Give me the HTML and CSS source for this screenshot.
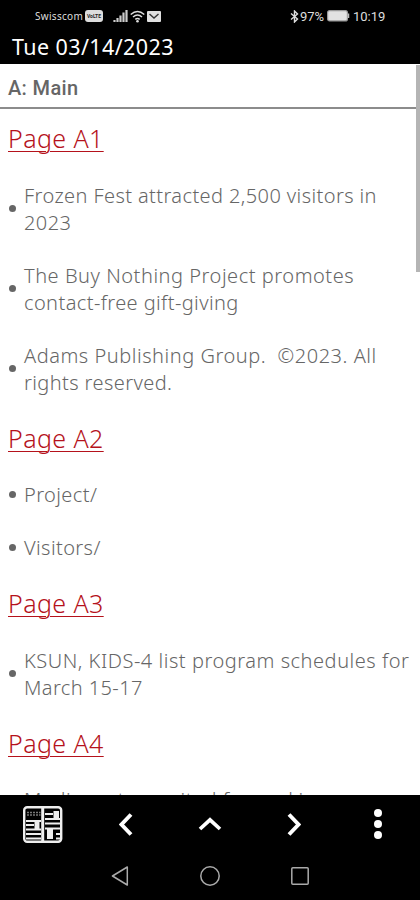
FILE: index.html
```html
<!DOCTYPE html>
<html lang="en">

<head>
    <meta charset="utf-8">
    <meta name="viewport" content="width=device-width, initial-scale=1.0">
    <title>Tue 03/14/2023</title>
    <link rel="stylesheet" href="styles.css">
</head>

<body>
    <header class="top">
        <div class="status">
            <div class="status-left">
                <span class="carrier">Swisscom</span>
                <span class="hd">VoLTE</span>
                <svg class="signal" width="15" height="14" viewBox="0 0 15 14">
                    <path d="M1.500 11v2M4.500 9v4M7.500 6.500v6.500M10.500 3.500v9.500M13.500 1v12" fill="none" stroke="#ccc" stroke-width="2.200" />
                </svg>
                <svg class="wifi" width="15" height="13" viewBox="0 0 15 13">
                    <path d="M.7 4.500Q7.500-1.500 14.300 4.500M3 7Q7.500 3 12 7M5.300 9.300Q7.500 7.500 9.700 9.300" fill="none" stroke="#ddd" stroke-width="1.500" />
                    <circle cx="7.500" cy="11.300" r="1.300" fill="#ddd" />
                </svg>
                <svg class="mail" width="14" height="11" viewBox="0 0 14 11">
                    <rect width="14" height="11" rx="1" fill="#e0e0e0" />
                    <path d="M2.500 3L7 7L11.500 3" fill="none" stroke="#333" stroke-width="1.400" />
                </svg>
            </div>
            <div class="status-right">
                <svg width="9" height="13" viewBox="0 0 9 13">
                    <path d="M1 3.500L7.500 9L4.500 12V1L7.500 4L1 9.500" fill="none" stroke="#ddd" stroke-width="1.400" />
                </svg>
                <span class="percent">97%</span>
                <svg class="battery" width="23" height="12" viewBox="0 0 23 12">
                    <rect x=".6" y=".6" width="19.800" height="10.300" rx="2" fill="#e2e2e2" stroke="#999" stroke-width="1.200" />
                    <path d="M21.500 3.500v4.500" stroke="#bbb" stroke-width="1.500" />
                </svg>
                <span class="clock">10:19</span>
            </div>
        </div>
        <h1 class="date">Tue 03/14/2023</h1>
    </header>

    <div class="section">A: Main</div>

    <main class="content">
        <h2><a class="page">Page A1</a></h2>
        <ul>
            <li class="tight">Frozen Fest attracted 2,500 visitors in<br>2023</li>
            <li>The Buy Nothing Project promotes<br><span class="tight">contact-free gift-giving</span></li>
            <li>Adams Publishing Group.&nbsp; ©2023. All<br><span class="tight">rights reserved.</span></li>
        </ul>
        <h2><a class="page">Page A2</a></h2>
        <ul>
            <li class="tight">Project/</li>
            <li class="tight">Visitors/</li>
        </ul>
        <h2><a class="page">Page A3</a></h2>
        <ul>
            <li>KSUN, KIDS-4 list program schedules for<br><span class="tight">March 15-17</span></li>
        </ul>
        <h2><a class="page">Page A4</a></h2>
        <ul>
            <li>Medicare too united for parking</li>
        </ul>
    </main>

    <footer>
        <nav class="tools">
            <svg class="paper" width="40" height="37" viewBox="0 0 40 37">
                <rect x="1.200" y="1.200" width="37" height="34.500" rx="3" fill="#000" stroke="#eee" stroke-width="2.400" />
                <path d="M19.700 1v35" stroke="#eee" stroke-width="3" />
                <path d="M4 6.500h13.500M4 9h13.500" stroke="#777" stroke-width="1.500" stroke-dasharray="2 1" />
                <path d="M3 15h15M3 19h8M3 23.500h15M3 28h15M3 32.500h15M22 8h8M22 13h15M22 17.500h15M22 22.500h15M33 28h4M33 32.500h4" fill="none" stroke="#eee" stroke-width="2" />
                <path d="M11.500 15h5v8h-5zM30.500 5h5.500v8h-5.500zM24 23h6v10h-6z" fill="#eee" />
            </svg>
            <svg width="14" height="23" viewBox="0 0 14 23">
                <path d="M12 1.500L2.500 11.500L12 21.500" fill="none" stroke="#fff" stroke-width="3.900" />
            </svg>
            <svg width="24" height="14" viewBox="0 0 24 14">
                <path d="M2 12L12 2.800L22 12" fill="none" stroke="#fff" stroke-width="3.700" />
            </svg>
            <svg width="14" height="23" viewBox="0 0 14 23">
                <path d="M2 1.500L11.500 11.500L2 21.500" fill="none" stroke="#fff" stroke-width="3.900" />
            </svg>
            <svg width="8" height="30" viewBox="0 0 8 30">
                <circle cx="4" cy="4" r="4" fill="#fff" />
                <circle cx="4" cy="15" r="4" fill="#fff" />
                <circle cx="4" cy="26" r="4" fill="#fff" />
            </svg>
        </nav>
        <nav class="system">
            <svg width="18" height="20" viewBox="0 0 18 20">
                <path d="M16.300 1L1.500 10L16.300 19Z" fill="none" stroke="#aaa" stroke-width="1.500" stroke-linejoin="round" />
            </svg>
            <svg width="20" height="20" viewBox="0 0 20 20">
                <circle cx="10" cy="10" r="9.200" fill="none" stroke="#aaa" stroke-width="1.500" />
            </svg>
            <svg width="18" height="18" viewBox="0 0 18 18">
                <rect x=".8" y=".8" width="16.400" height="16.400" rx="1" fill="none" stroke="#aaa" stroke-width="1.500" />
            </svg>
        </nav>
    </footer>
    <div class="scrollbar"></div>
</body>

</html>
```
FILE: styles.css
```css
* {
    box-sizing: border-box;
}

body {
    position: relative;
    margin: 0;
    height: 900px;
    display: flex;
    flex-direction: column;
    overflow: hidden;
    background: #fff;
    font-family: "Noto Sans", sans-serif;
}

svg {
    display: block;
    flex: none;
}

.top {
    height: 64px;
    background: #000;
    color: #fff;
}

.status {
    height: 32px;
    padding: 0 34px 0 35px;
    display: flex;
    justify-content: space-between;
    align-items: center;
    color: #ddd;
}

.status-left,
.status-right {
    display: flex;
    align-items: center;
}

.carrier {
    width: 50px;
    font: 10px "Noto Sans", sans-serif;
    letter-spacing: 0.3px;
}

.hd {
    width: 18px;
    height: 12px;
    border-radius: 3px;
    background: #ddd;
    color: #222;
    font: bold 5px/12px Roboto, sans-serif;
    text-align: center;
}

.signal {
    margin-left: 10px;
}

.wifi {
    margin-left: 2px;
}

.mail {
    margin-left: 2px;
}

.percent,
.clock {
    font: 13px Roboto, sans-serif;
}

.percent {
    width: 27px;
    margin-left: 1px;
}

.clock {
    width: 33px;
    margin-left: 3px;
}

.date {
    margin: 0;
    padding-left: 12px;
    font-size: 21.5px;
    font-weight: 400;
    line-height: 30px;
    letter-spacing: 0.4px;
}

.section {
    height: 45px;
    padding-left: 8px;
    border-bottom: 2px solid #8c8c8c;
    color: #666;
    font: 500 20px/49px Roboto, sans-serif;
    letter-spacing: 0.35px;
}

.content {
    flex: 1;
    min-height: 0;
    overflow: hidden;
    padding: 13px 8px 0;
    color: #666;
}

h2 {
    margin: 0 0 26px;
    font-size: 25px;
    font-weight: 300;
    line-height: 33.5px;
    letter-spacing: 0.4px;
}

.page {
    color: #b5121b;
    text-decoration: underline;
    text-decoration-thickness: 1px;
    text-underline-offset: 3px;
}

ul {
    margin: 0;
    padding: 0;
    list-style: none;
}

li {
    position: relative;
    margin-bottom: 26px;
    padding-left: 16px;
    font-size: 20px;
    font-weight: 300;
    line-height: 27px;
    letter-spacing: 0.53px;
    white-space: nowrap;
}

.tight {
    letter-spacing: 0.4px;
}

li::before {
    content: "";
    position: absolute;
    left: 1px;
    top: 50%;
    width: 7px;
    height: 7px;
    margin-top: -4px;
    border-radius: 50%;
    background: #666;
}

.scrollbar {
    position: absolute;
    right: 0;
    top: 65px;
    width: 4px;
    height: 207px;
    background: #b5b5b5;
}

footer {
    height: 105px;
    background: #000;
}

.tools {
    height: 58px;
    display: grid;
    grid-template-columns: repeat(5, 84px);
    align-items: center;
    justify-items: center;
}

.paper {
    margin-left: 2px;
}

.system {
    height: 46px;
    padding: 0 111px;
    display: flex;
    align-items: center;
    justify-content: space-between;
}
```
